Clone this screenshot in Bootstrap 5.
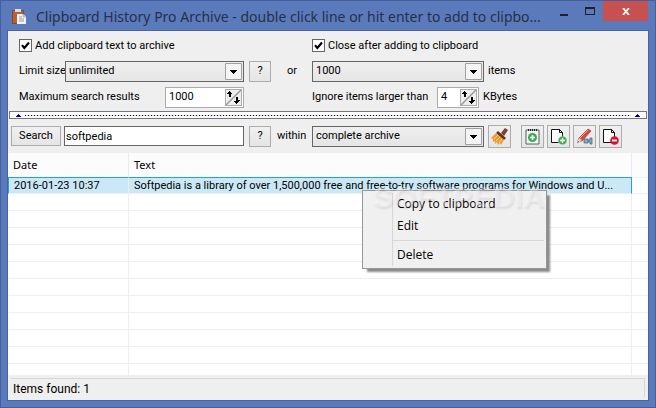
<!DOCTYPE html>
<html lang="en">
<head>
<meta charset="utf-8">
<meta name="viewport" content="width=device-width, initial-scale=1">
<title>Clipboard History Pro Archive</title>
<link href="https://cdn.jsdelivr.net/npm/bootstrap@5.3.0/dist/css/bootstrap.min.css" rel="stylesheet">
<style>
  body { font: 11px/16px Roboto, "Noto Sans", sans-serif; color: #000; }
  .win { background: #5a7abb; border: 1px solid #455f9c; padding: 0 7px 7px; }
  .titlebar { height: 30px; padding-left: 4px; font: 14px/28px "Noto Sans", sans-serif; color: #26304a; }
  .titlebar h1 { font: inherit; padding: 2px 0 0 10px; }
  .winbtn { border: 0; padding: 0; background: none; width: 26px; height: 20px; line-height: 1; display: flex; align-items: center; justify-content: center; flex: none; }
  .winbtn.close-win { width: 45px; background: #c75050; }
  .client { background: #efefef; outline: 1px solid #4766a6; }
  .row-a { height: 28px; padding-top: 1px; }
  .row-b { height: 24px; }
  .row-c { height: 28px; }
  .search-row { height: 34px; }
  .half { flex: 0 0 47.5%; padding-left: 11px; }
  .half.tight { padding-left: 3px; }
  .tail { width: 41px; flex: none; }
  .tick { appearance: none; width: 13px; height: 13px; border: 1px solid #666; border-radius: 0; margin: 0 3px 0 0; background: #fff; flex: none; }
  .tick:checked { background: #fff url("data:image/svg+xml,%3Csvg xmlns='http://www.w3.org/2000/svg' viewBox='0 0 11 11'%3E%3Cpath d='M2 5.2 4.3 8 9 2.5' fill='none' stroke='%23000' stroke-width='2.1'/%3E%3C/svg%3E") center/11px no-repeat; }
  .combo { appearance: none; height: 21px; border: 1px solid #666; border-radius: 0; padding: 0 20px 0 3px; color: #000; line-height: 18px; min-width: 0;
    background: url("data:image/svg+xml,%3Csvg xmlns='http://www.w3.org/2000/svg' width='17' height='17'%3E%3Cpath d='M.5.5h16v16H.5z' fill='%23f4f4f4' stroke='%23a0a0a0'/%3E%3Cpath d='M5 7h7v1h-1v1h-1v1H9v1H8v-1H7V9H6V8H5z'/%3E%3C/svg%3E") right 1px center no-repeat, linear-gradient(#efefef, #e5e5e5); }
  .combo.wide { width: 172px; flex: none; }
  .box { height: 21px; border: 1px solid #acacac; background: #fff; }
  .box input, .query { border: 0; padding: 0 3px; min-width: 0; background: #fff; color: #000; }
  .query { height: 20px; border: 1px solid #666; padding: 0 1px; }
  .spin { width: 17px; height: 17px; border: 1px solid #acacac; background: #eee; padding: 0; flex: none; margin-right: 1px; line-height: 0; }
  .push { border: 1px solid #acacac; border-radius: 0; background: linear-gradient(#f0f0f0, #e5e5e5); padding: 0; height: 21px; color: #000; flex: none; }
  .help { width: 22px; margin-left: 5px; }
  .go { width: 50px; height: 20px; margin-right: 3px; }
  .tool { width: 23px; height: 23px; line-height: 0; display: flex; align-items: center; justify-content: center; }
  .tool-gap { margin-left: 10px; }
  .tool-next { margin-left: 3px; }
  .lbl-limit { width: 46px; white-space: nowrap; }
  .lbl-larger { width: 125px; white-space: nowrap; }
  .lbl-within { padding-left: 6px; }
  .max-box { width: 79px; }
  .small-box { width: 42px; }
  .gap-cell { width: 68px; flex: none; }
  .splitter { height: 8px; margin: 0 1px; border: 1px solid #777; background: #fff; padding: 0 6px; }
  .dots { height: 1px; background: repeating-linear-gradient(90deg, #00007d 0 1px, #d8d8ee 1px 3px); }
  .listing { background: #fff; min-height: 0; }
  .grid-list { table-layout: fixed; border-collapse: separate; border-spacing: 0; }
  .grid-list th { height: 24px; font: 11px/16px "Noto Sans", sans-serif; background: #fcfcfc; padding: 0 5px; border-right: 1px solid #e3edf8; }
  .grid-list td { height: 17px; line-height: 16px; padding: 0 5px; border-right: 1px solid #eee; border-bottom: 1px solid #eee; overflow: hidden; white-space: nowrap; text-overflow: ellipsis; }
  .grid-list th:last-child, .grid-list td:last-child { border-right: 0; }
  .grid-list .picked td { background: #cbe8f6; border-top: 1px solid #26a0da; line-height: 15px; }
  .grid-list .picked td:first-child { border-left: 1px solid #26a0da; }
  .grid-list .picked td:nth-child(2) { border-right-color: #26a0da; }
  .grid-list .picked td:last-child { background: #fff; border-top-color: #eee; }
  .c-date { width: 121px; }
  .c-end { width: 16px; }
  .ctx { left: 354px; top: 37px; width: 185px; background: #f0f0f0; border: 1px solid #979797; box-shadow: 4px 4px 2px -1px #8a8a8a; padding: 2px; font: 12px/16px "Open Sans", sans-serif; }
  .ctx button { display: block; width: 100%; border: 0; background: none; padding: 3px 4px 3px 32px; text-align: left; color: #000; }
  .ctx .rule { border-top: 1px solid #d7d7d7; margin: 3px 0 3px 28px; }
  .ctx .gutter { left: 29px; top: 2px; bottom: 2px; border-left: 1px solid #d7d7d7; }
  .stamp { left: 365px; top: 31px; font: 700 30px/26px "Liberation Sans", sans-serif; color: rgba(255,255,255,.35); text-shadow: 1px 2px 2px rgba(0,0,0,.08); pointer-events: none; }
  .statusbar { height: 25px; padding: 3px; font-size: 12px; }
  .statusbar div { border-top: 1px solid #d7d7d7; border-right: 1px solid #d7d7d7; padding: 2px; height: 19px; }
</style>
<script src="https://cdn.jsdelivr.net/npm/bootstrap@5.3.0/dist/js/bootstrap.bundle.min.js"></script>
</head>
<body>
<main class="win vh-100 d-flex flex-column">
  <header class="titlebar d-flex align-items-start flex-shrink-0">
    <svg class="flex-shrink-0 mt-2" width="14" height="16" viewBox="0 0 14 16" aria-hidden="true">
      <path d="M0 1h12v14H0z" fill="#8a4526"/><path d="M1 2h10v12H1z" fill="#b0623a"/>
      <path d="M3 0h6v3H3z" fill="#d9dde2"/><path d="M5 5h6l3 3v7H5z" fill="#f4f6f4"/><path d="M11 5v3h3" fill="#cdd3d3" stroke="#98a2a2" stroke-width=".6"/>
      <path d="M7 8h3M7 10h5M7 12h5" stroke="#8fa0a0"/>
    </svg>
    <h1 class="m-0 text-truncate flex-grow-1">Clipboard History Pro Archive - double click line or hit enter to add to clipbo...</h1>
    <button class="winbtn" aria-label="Minimize"><svg width="8" height="16"><path d="M0 11h8v2H0z" fill="#202020"/></svg></button>
    <button class="winbtn" aria-label="Maximize"><svg width="10" height="8"><path d="M0 0h10v8H0zM1 2v5h8V2z" fill="#202020" fill-rule="evenodd"/></svg></button>
    <button class="winbtn close-win" aria-label="Close"><svg width="8" height="7"><path d="M1 0 7 7M7 0 1 7" stroke="#fff" stroke-width="1.8"/></svg></button>
  </header>

  <div class="client flex-grow-1 d-flex flex-column overflow-hidden">
    <form class="flex-shrink-0">
      <div class="d-flex align-items-center row-a">
        <div class="half d-flex align-items-center"><input class="tick" type="checkbox" id="add" checked><label for="add">Add clipboard text to archive</label></div>
        <div class="d-flex align-items-center"><input class="tick" type="checkbox" id="close" checked><label for="close">Close after adding to clipboard</label></div>
      </div>
      <div class="d-flex align-items-center row-b">
        <div class="half d-flex align-items-center">
          <label for="limit" class="lbl-limit">Limit size</label>
          <select class="combo flex-grow-1" id="limit"><option>unlimited</option></select>
          <button type="button" class="push help">?</button>
          <label for="count" class="tail ps-3">or</label>
        </div>
        <select class="combo wide" id="count"><option>1000</option></select>
        <label for="count" class="ps-1">items</label>
      </div>
      <div class="d-flex align-items-center row-c">
        <div class="half d-flex align-items-center">
          <label for="max" class="flex-grow-1">Maximum search results</label>
          <div class="box d-flex align-items-center max-box"><input class="w-100" id="max" value="1000"><button type="button" class="spin" aria-label="Change maximum"><svg width="15" height="15"><path d="M0 15 15 0" stroke="#999" stroke-width="1.5"/><path d="M3 1h1v1h1v1h1v1H5v3H3V4H1V3h1V2h1zM10 7h2v3h2v1h-1v1h-1v1h-1v1h-1v-1H9v-1H8v-1h2z"/></svg></button></div>
          <span class="gap-cell"></span>
        </div>
        <label for="larger" class="lbl-larger">Ignore items larger than</label>
        <div class="box d-flex align-items-center small-box"><input class="w-100" id="larger" value="4"><button type="button" class="spin" aria-label="Change size"><svg width="15" height="15"><path d="M0 15 15 0" stroke="#999" stroke-width="1.5"/><path d="M3 1h1v1h1v1h1v1H5v3H3V4H1V3h1V2h1zM10 7h2v3h2v1h-1v1h-1v1h-1v1h-1v-1H9v-1H8v-1h2z"/></svg></button></div>
        <label for="larger" class="ps-1">KBytes</label>
      </div>
      <div class="splitter d-flex align-items-center" role="separator">
        <svg width="5" height="3"><path d="M2 0h1v1h1v1h1v1H0V2h1V1h1z" fill="#00007d"/></svg>
        <div class="dots flex-grow-1 mx-1"></div>
        <svg width="5" height="3"><path d="M2 0h1v1h1v1h1v1H0V2h1V1h1z" fill="#00007d"/></svg>
      </div>
      <div class="d-flex align-items-center search-row">
        <div class="half tight d-flex align-items-center">
          <button type="button" class="push go">Search</button>
          <input class="query flex-grow-1" value="softpedia" aria-label="Search text">
          <button type="button" class="push help">?</button>
          <label for="scope" class="tail lbl-within">within</label>
        </div>
        <select class="combo wide" id="scope"><option>complete archive</option></select>
        <button type="button" class="push tool ms-1" aria-label="Clean up"><svg width="17" height="17" viewBox="0 0 17 17"><path d="m10 5 4-5 3 2-4 6z" fill="#7b4526"/><path d="M5 5l2-2 8 7-2 2z" fill="#643416"/><path d="m5 5 8 7-3 5-1-2-2 2-1-3-2 2v-3l-2 1v-3l-2-1z" fill="#ee9a35"/><path d="M7 7 3 11M9 9l-4 4M11 11l-3 4" stroke="#f9cf77"/></svg></button>
        <button type="button" class="push tool tool-gap" aria-label="Add to clipboard"><svg width="17" height="17" viewBox="0 0 17 17"><path d="M2 2h13v14H2z" fill="#f4f7f4" stroke="#526058"/><path d="M4 2h9" stroke="#222" stroke-width="2" stroke-dasharray="1 1"/><circle cx="8.500" cy="9.500" r="4.500" fill="#3aab50"/><path d="M8.500 7v5M6 9.500h5" stroke="#fff" stroke-width="1.600"/></svg></button>
        <button type="button" class="push tool tool-next" aria-label="New item"><svg width="17" height="17" viewBox="0 0 17 17"><path d="M1.500 1.500h8l3 3v10h-11z" fill="#fff" stroke="#111"/><path d="M9.500 1v3.500h3" fill="none" stroke="#111"/><circle cx="12.500" cy="12.500" r="4.300" fill="#3aab50" stroke="#bfe0c2" stroke-width=".6"/><path d="M12.500 10v5M10 12.500h5" stroke="#fff" stroke-width="1.500"/></svg></button>
        <button type="button" class="push tool tool-next" aria-label="Edit item"><svg width="17" height="17" viewBox="0 0 17 17"><path d="m2 13 1-3L12 1l3 2-9 10z" fill="#d9483c" stroke="#a5342c" stroke-width=".7"/><path d="m4 10 8-8" stroke="#f5a69b"/><path d="m1 15 2-5 3 2z" fill="#ead4b6"/><path d="m1 15 1-2 1 1z" fill="#333"/><path d="M8 11h4v4H8zM12 12h2v-2h2v6h-2v-2h-2" fill="#85abc6" stroke="#40627b" stroke-width=".7"/></svg></button>
        <button type="button" class="push tool tool-next" aria-label="Delete item"><svg width="17" height="17" viewBox="0 0 17 17"><path d="M1.500 1.500h8l3 3v10h-11z" fill="#fff" stroke="#111"/><path d="M9.500 1v3.500h3" fill="none" stroke="#111"/><circle cx="12.500" cy="12.500" r="4.300" fill="#d8142c"/><path d="M10 12.500h5" stroke="#fff" stroke-width="1.800"/></svg></button>
      </div>
    </form>

    <section class="listing flex-grow-1 position-relative">
      <div class="h-100 overflow-hidden">
      <table class="grid-list w-100">
        <colgroup><col class="c-date"><col><col class="c-end"></colgroup>
        <thead><tr><th>Date</th><th>Text</th><th></th></tr></thead>
        <tbody>
          <tr class="picked"><td>2016-01-23 10:37</td><td>Softpedia is a library of over 1,500,000 free and free-to-try software programs for Windows and U...</td><td></td></tr>
          <tr><td></td><td></td><td></td></tr><tr><td></td><td></td><td></td></tr><tr><td></td><td></td><td></td></tr>
          <tr><td></td><td></td><td></td></tr><tr><td></td><td></td><td></td></tr><tr><td></td><td></td><td></td></tr>
          <tr><td></td><td></td><td></td></tr><tr><td></td><td></td><td></td></tr><tr><td></td><td></td><td></td></tr>
          <tr><td></td><td></td><td></td></tr><tr><td></td><td></td><td></td></tr>
        </tbody>
      </table>
      </div>
      <div class="ctx position-absolute" role="menu">
        <span class="gutter position-absolute"></span>
        <button role="menuitem">Copy to clipboard</button>
        <button role="menuitem">Edit</button>
        <div class="rule"></div>
        <button role="menuitem">Delete</button>
      </div>
      <div class="stamp position-absolute">SOFTPEDIA</div>
    </section>
    <footer class="statusbar flex-shrink-0"><div>Items found: 1</div></footer>
  </div>
</main>
</body>
</html>
